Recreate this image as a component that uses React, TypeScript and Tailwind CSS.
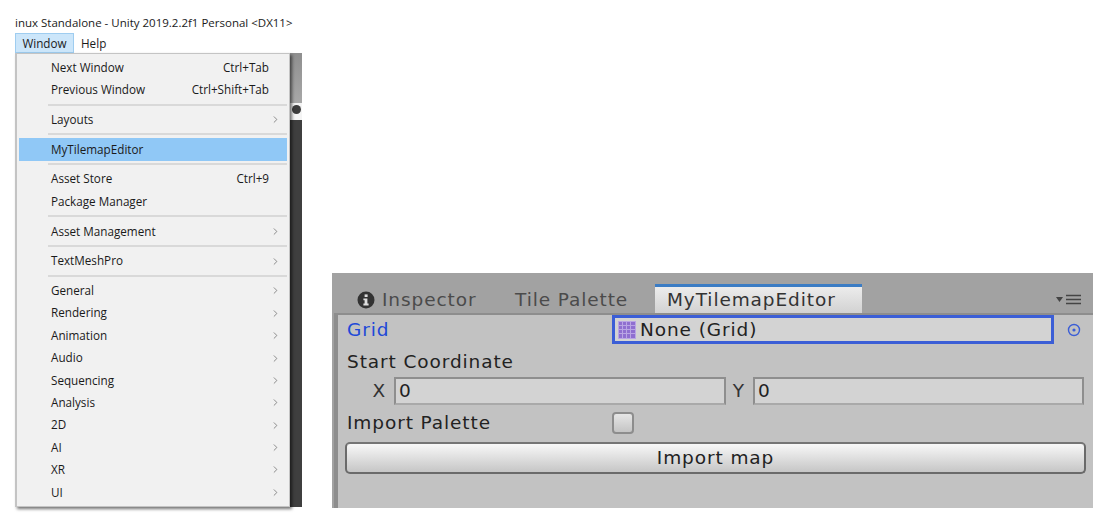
import React from 'react';
import { ChevronRight } from 'lucide-react';

type MenuRow = { label: string; shortcut?: string; sub?: boolean; active?: boolean };

const sections: MenuRow[][] = [
  [
    { label: 'Next Window', shortcut: 'Ctrl+Tab' },
    { label: 'Previous Window', shortcut: 'Ctrl+Shift+Tab' },
  ],
  [{ label: 'Layouts', sub: true }],
  [{ label: 'MyTilemapEditor', active: true }],
  [{ label: 'Asset Store', shortcut: 'Ctrl+9' }, { label: 'Package Manager' }],
  [{ label: 'Asset Management', sub: true }],
  [{ label: 'TextMeshPro', sub: true }],
  [
    { label: 'General', sub: true },
    { label: 'Rendering', sub: true },
    { label: 'Animation', sub: true },
    { label: 'Audio', sub: true },
    { label: 'Sequencing', sub: true },
    { label: 'Analysis', sub: true },
    { label: '2D', sub: true },
    { label: 'AI', sub: true },
    { label: 'XR', sub: true },
    { label: 'UI', sub: true },
  ],
];

function Row({ row }: { row: MenuRow }) {
  return (
    <div className={`flex h-[22.4px] items-center pl-[32px] pr-[9px] ${row.active ? 'bg-[#90c8f6]' : ''}`}>
      <span className="flex-1">{row.label}</span>
      {row.shortcut && <span className="mr-[9px]">{row.shortcut}</span>}
      {row.sub && <ChevronRight size={11} strokeWidth={1.6} className="mr-[-3px] text-[#666]" />}
    </div>
  );
}

function WindowMenu() {
  return (
    <div className="z-10 flex h-[454px] w-[275px] flex-col border border-[#c4c4c4] border-l-2 bg-[#f1f1f1] px-[2px] pt-[2.2px] text-[11.7px] text-[#1a1a1a] shadow-[2px_2px_3px_rgba(0,0,0,0.55)]">
      {sections.map((rows, i) => (
        <React.Fragment key={i}>
          {i > 0 && (
            <div className="flex h-[7.4px] items-center pl-[29px]">
              <div className="h-[2px] w-full bg-[#d9d9d9]" />
            </div>
          )}
          {rows.map((row) => (
            <Row key={row.label} row={row} />
          ))}
        </React.Fragment>
      ))}
    </div>
  );
}

function GridIcon() {
  return (
    <svg width="18" height="18" viewBox="0 0 18 18" className="shrink-0">
      <rect width="18" height="18" fill="#8f6fd0" />
      <path d="M0 .5H18M0 4.5H18M0 8.5H18M0 12.5H18M0 17.5H18M.5 0V18M4.5 0V18M8.5 0V18M12.5 0V18M17.5 0V18" stroke="#b9a5e4" strokeWidth="1" />
    </svg>
  );
}

function InfoIcon() {
  return (
    <svg width="18" height="18" viewBox="0 0 18 18">
      <circle cx="9" cy="9" r="8.5" fill="#333" />
      <rect x="7.6" y="3.4" width="3" height="2.6" fill="#ddd" />
      <path d="M6.4 7.4H10.4V12.6H11.6V14.4H6.4V12.6H7.6V9.2H6.4Z" fill="#ddd" />
    </svg>
  );
}

function NumberField({ value, label }: { value: string; label: string }) {
  return (
    <>
      <span className="w-[20px] pr-[4px] text-right text-[#333]">{label}</span>
      <div className="flex h-[28px] flex-1 items-center border-2 border-[#8e8e8e] border-b-[#a9a9a9] bg-[#d3d3d3] pl-[3px] text-[#222]">
        {value}
      </div>
    </>
  );
}

function TilemapPanel() {
  return (
    <div className="ml-[30px] mt-[273px] flex h-[235px] w-[761px] flex-col bg-[#a2a2a2] font-['DejaVu_Sans',sans-serif] text-[18.5px] tracking-[0.9px]">
      <div className="flex h-[40px] shrink-0 items-end pl-[25px] pr-[12px]">
        <div className="flex h-[27px] w-[142px] items-center gap-[7px] text-[#4b4b4b]">
          <InfoIcon />
          <span>Inspector</span>
        </div>
        <div className="flex h-[27px] w-[156px] items-center pl-[16px] text-[#4b4b4b]">Tile Palette</div>
        <div className="flex h-[29px] w-[207px] items-center border-t-[3px] border-[#3b7cc4] bg-gradient-to-b from-[#ececec] to-[#d2d2d2] pl-[12px] text-[#333]">
          MyTilemapEditor
        </div>
        <div className="ml-auto flex h-[27px] items-center gap-[3px]">
          <svg width="7" height="5" viewBox="0 0 7 5">
            <path d="M0 0H7L3.5 5Z" fill="#444" />
          </svg>
          <svg width="15" height="11" viewBox="0 0 15 11">
            <path d="M0 1.5H15M0 5.5H15M0 9.5H15" stroke="#444" strokeWidth="1.6" />
          </svg>
        </div>
      </div>
      <div className="ml-[2px] flex flex-1 flex-col border-l-[4px] border-t-[2px] border-[#8d8d8d] bg-[#c2c2c2] pl-[9px] pr-[9px] text-[#222]">
        <div className="flex h-[29px] items-center">
          <span className="w-[265px] text-[#2049d8]">Grid</span>
          <div className="flex h-[29px] w-[442px] items-center gap-[4px] border-[3px] border-[#3b5ed6] bg-[#d3d3d3] pl-[3px] text-[#222]">
            <GridIcon />
            <span>None (Grid)</span>
          </div>
          <svg width="14" height="14" viewBox="0 0 14 14" className="ml-[13px]">
            <circle cx="7" cy="7" r="5.5" fill="none" stroke="#3b5ed6" strokeWidth="1.4" />
            <circle cx="7" cy="7" r="1.6" fill="#3b5ed6" />
          </svg>
        </div>
        <div className="flex h-[33px] items-end pb-[1px] text-[#222]">Start Coordinate</div>
        <div className="flex h-[28px] items-center pl-[23px]">
          <div className="flex h-[28px] w-[356px] items-center gap-[4px]">
            <NumberField label="X" value="0" />
          </div>
          <div className="ml-[3px] flex h-[28px] flex-1 items-center gap-[4px]">
            <NumberField label="Y" value="0" />
          </div>
        </div>
        <div className="flex h-[35px] items-center">
          <span className="w-[265px] text-[#222]">Import Palette</span>
          <div className="h-[22px] w-[22px] rounded-[4px] border-2 border-[#8d8d8d] bg-gradient-to-b from-[#e6e6e6] to-[#c4c4c4]" />
        </div>
        <div className="mx-[-2px] mt-[2px] flex h-[32px] items-center justify-center rounded-[5px] border-2 border-[#6a6a6a] border-t-[#757575] bg-gradient-to-b from-[#f8f8f8] to-[#c6c6c6] text-[#222]">
          Import map
        </div>
      </div>
    </div>
  );
}

export default function App() {
  return (
    <div className="flex h-[516px] w-[1109px] overflow-hidden bg-white">
      <div className="flex w-[302px] shrink-0 flex-col font-['Open_Sans',sans-serif] text-[11.7px] text-[#1a1a1a]">
        <div className="flex h-[33px] items-end whitespace-nowrap pb-[2px] pl-[15px] text-[11.5px]">
          inux Standalone - Unity 2019.2.2f1 Personal &lt;DX11&gt;
        </div>
        <div className="ml-[15px] flex h-[20px] items-center">
          <div className="flex h-[20px] w-[59px] items-center justify-center border border-[#9fcdf0] bg-[#cce6fa] pt-[1px]">Window</div>
          <div className="pl-[7px] pt-[1px]">Help</div>
        </div>
        <div className="ml-[15px] flex">
          <WindowMenu />
          <div className="flex w-[12px] flex-col">
            <div className="h-[50px] bg-gradient-to-b from-[#8f8f8f] to-[#a8a8a8]" />
            <div className="flex h-[17px] justify-center bg-[#f4f4f4]">
              <div className="mt-[2px] h-[9px] w-[9px] rounded-full bg-[#3c3c3c]" />
            </div>
            <div className="h-[387px] bg-[#3f3f3f]" />
          </div>
        </div>
      </div>
      <TilemapPanel />
    </div>
  );
}
